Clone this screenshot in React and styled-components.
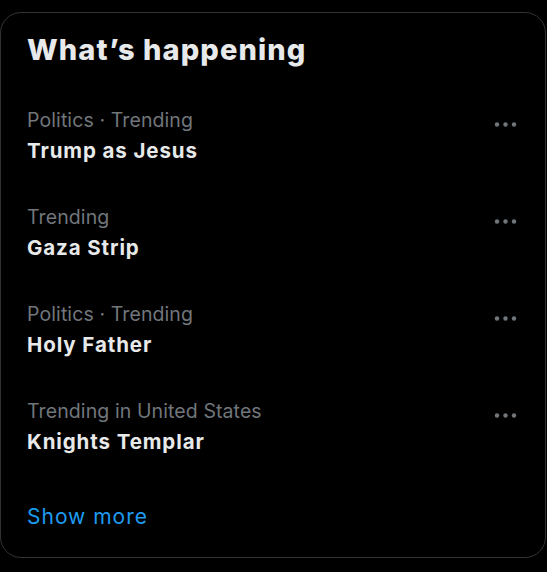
import React from 'react';
import styled, { createGlobalStyle } from 'styled-components';

const GlobalStyle = createGlobalStyle`
  html, body {
    margin: 0;
    padding: 0;
    background: #000;
  }
  body {
    font-family: Inter, "Liberation Sans", sans-serif;
    -webkit-font-smoothing: antialiased;
  }
`;

const Page = styled.div`
  width: 547px;
  height: 572px;
  padding-top: 12px;
  box-sizing: border-box;
  background: #000;
`;

const Card = styled.section`
  width: 546px;
  box-sizing: border-box;
  border: 1px solid #2f3336;
  border-radius: 21px;
  background: #000;
  overflow: hidden;
`;

const Heading = styled.h2`
  margin: 0;
  padding: 19px 26px 19px;
  font-size: 29px;
  line-height: 36px;
  font-weight: 800;
  color: #e7e9ea;
  letter-spacing: 1.1px;
`;

const Row = styled.div`
  display: flex;
  justify-content: space-between;
  align-items: flex-start;
  padding: 20px 27px 20px 26px;
`;

const Info = styled.div`
  display: flex;
  flex-direction: column;
  gap: 5px;
`;

const Meta = styled.span`
  font-size: 19.5px;
  line-height: 26px;
  color: #71767b;
  letter-spacing: 0.1px;
`;

const Topic = styled.span`
  font-size: 20.5px;
  line-height: 26px;
  font-weight: 700;
  color: #e7e9ea;
  letter-spacing: 0.9px;
`;

const MoreButton = styled.div`
  width: 25px;
  height: 25px;
  margin-top: 5px;
  color: #71767b;
  display: flex;
`;

const ShowMore = styled.a`
  display: block;
  padding: 29px 26px 27px;
  font-size: 21px;
  line-height: 26px;
  color: #1d9bf0;
  letter-spacing: 1px;
  text-decoration: none;
`;

const Dots = () => (
  <svg width="25" height="25" viewBox="0 0 25 25" fill="currentColor">
    <circle cx="4" cy="12.5" r="2.2" />
    <circle cx="12.5" cy="12.5" r="2.2" />
    <circle cx="21" cy="12.5" r="2.2" />
  </svg>
);

const trends = [
  { meta: 'Politics · Trending', topic: 'Trump as Jesus' },
  { meta: 'Trending', topic: 'Gaza Strip' },
  { meta: 'Politics · Trending', topic: 'Holy Father' },
  { meta: 'Trending in United States', topic: 'Knights Templar' },
];

const App = () => (
  <Page>
    <GlobalStyle />
    <Card>
      <Heading>What’s happening</Heading>
      {trends.map((t) => (
        <Row key={t.topic}>
          <Info>
            <Meta>{t.meta}</Meta>
            <Topic>{t.topic}</Topic>
          </Info>
          <MoreButton>
            <Dots />
          </MoreButton>
        </Row>
      ))}
      <ShowMore href="#">Show more</ShowMore>
    </Card>
  </Page>
);

export default App;
